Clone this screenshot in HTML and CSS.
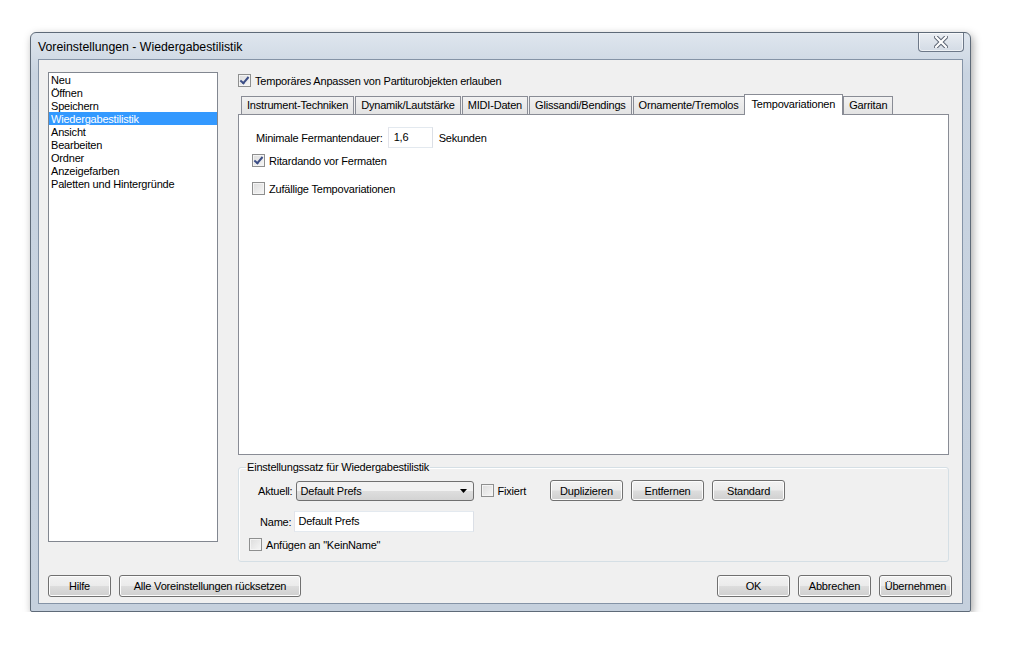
FILE: index.html
```html
<!DOCTYPE html>
<html lang="de">
<head>
    <meta charset="UTF-8">
    <title>Voreinstellungen - Wiedergabestilistik</title>
    <link rel="stylesheet" href="styles.css">
</head>
<body>
    <div class="window">
        <div class="titlebar">
            <span class="title">Voreinstellungen - Wiedergabestilistik</span>
            <div class="close-btn">
                <svg width="14" height="12" viewBox="0 0 14 12">
                    <path d="M2 1 L12 11 M12 1 L2 11" stroke="#5b6473" stroke-width="4.2" stroke-linecap="square"/>
                    <path d="M2 1 L12 11 M12 1 L2 11" stroke="#ffffff" stroke-width="2.2" stroke-linecap="square"/>
                </svg>
            </div>
        </div>
        <div class="client">
            <div class="main-row">
                <ul class="listbox">
                    <li>Neu</li>
                    <li>Öffnen</li>
                    <li>Speichern</li>
                    <li class="selected">Wiedergabestilistik</li>
                    <li>Ansicht</li>
                    <li>Bearbeiten</li>
                    <li>Ordner</li>
                    <li>Anzeigefarben</li>
                    <li>Paletten und Hintergründe</li>
                </ul>
                <div class="right-col">
                    <label class="check top-check"><span class="box checked"></span>Temporäres Anpassen von Partiturobjekten erlauben</label>
                    <div class="tabs">
                        <div class="tab">Instrument-Techniken</div>
                        <div class="tab">Dynamik/Lautstärke</div>
                        <div class="tab">MIDI-Daten</div>
                        <div class="tab">Glissandi/Bendings</div>
                        <div class="tab">Ornamente/Tremolos</div>
                        <div class="tab active">Tempovariationen</div>
                        <div class="tab">Garritan</div>
                    </div>
                    <div class="tab-panel">
                        <div class="field-row">
                            <span>Minimale Fermantendauer:</span>
                            <span class="textbox small">1,6</span>
                            <span>Sekunden</span>
                        </div>
                        <label class="check ritard"><span class="box checked"></span>Ritardando vor Fermaten</label>
                        <label class="check random"><span class="box"></span>Zufällige Tempovariationen</label>
                    </div>
                    <fieldset class="group">
                        <legend>Einstellungssatz für Wiedergabestilistik</legend>
                        <div class="group-row">
                            <span class="lbl">Aktuell:</span>
                            <div class="combo">
                                <span>Default Prefs</span>
                                <svg width="7" height="4" viewBox="0 0 7 4"><path d="M0 0 H7 L3.5 4 Z" fill="#000"/></svg>
                            </div>
                            <label class="check fix"><span class="box"></span>Fixiert</label>
                            <div class="btn">Duplizieren</div>
                            <div class="btn">Entfernen</div>
                            <div class="btn">Standard</div>
                        </div>
                        <div class="group-row name-row">
                            <span class="lbl">Name:</span>
                            <span class="textbox name">Default Prefs</span>
                        </div>
                        <label class="check attach"><span class="box"></span>Anfügen an "KeinName"</label>
                    </fieldset>
                </div>
            </div>
            <div class="footer">
                <div class="btn help">Hilfe</div>
                <div class="btn reset">Alle Voreinstellungen rücksetzen</div>
                <div class="spacer"></div>
                <div class="btn">OK</div>
                <div class="btn">Abbrechen</div>
                <div class="btn">Übernehmen</div>
            </div>
        </div>
    </div>
</body>
</html>
```

FILE: styles.css
```css
body {
    margin: 0;
    background: #ffffff;
    font-family: "Liberation Sans", Arial, sans-serif;
    font-size: 11px;
    letter-spacing: -0.2px;
    color: #000;
}

.window {
    margin: 32px 0 0 30px;
    width: 941px;
    height: 580px;
    box-sizing: border-box;
    border: 1px solid #5e6a78;
    border-radius: 6px 6px 2px 2px;
    background: linear-gradient(#dfe6ee, #c9d4e1 40px, #c5d0dd);
    box-shadow: 2px 3px 8px rgba(0, 0, 0, 0.35);
    padding: 0 7px 7px 7px;
    display: flex;
    flex-direction: column;
}

.titlebar {
    height: 26px;
    display: flex;
    align-items: flex-start;
    justify-content: space-between;
}

.title {
    font-size: 12.3px;
    letter-spacing: 0;
    margin-top: 7px;
    color: #000;
}

.close-btn {
    width: 44px;
    height: 18px;
    margin-right: -1px;
    border: 1px solid #6d7888;
    border-top: none;
    border-radius: 0 0 4px 4px;
    background: linear-gradient(#e9edf2, #d3dbe5);
    box-shadow: inset 0 0 0 1px rgba(255, 255, 255, 0.6);
    display: flex;
    align-items: center;
    justify-content: center;
}

.client {
    flex: 1;
    border: 1px solid #8493a6;
    background: #f0f0f0;
    padding: 12px 13px 0 9px;
    display: flex;
    flex-direction: column;
}

.main-row {
    display: flex;
    height: 490px;
}

.listbox {
    list-style: none;
    margin: 0;
    padding: 0;
    width: 168px;
    height: 468px;
    border: 1px solid #828790;
    background: #fff;
}

.listbox li {
    height: 13px;
    line-height: 15px;
    padding-left: 2px;
}

.listbox li.selected {
    background: #3399ff;
    color: #fff;
}

.right-col {
    margin-left: 20px;
    flex: 1;
    display: flex;
    flex-direction: column;
}

.check {
    display: flex;
    align-items: center;
    height: 13px;
}

.box {
    width: 11px;
    height: 11px;
    border: 1px solid #8e8f8f;
    background: linear-gradient(135deg, #dcdcdc, #f6f6f6);
    box-shadow: inset 0 0 0 1px #f4f4f4;
    margin-right: 4px;
    position: relative;
    flex: none;
}

.box.checked::after {
    content: "";
    position: absolute;
    left: 3px;
    top: 0px;
    width: 3px;
    height: 7px;
    border: solid #3c4e86;
    border-width: 0 2px 2px 0;
    transform: rotate(40deg);
}

.top-check {
    margin-top: 1px;
    padding-top: 1px;
}

.tabs {
    display: flex;
    align-items: flex-end;
    margin-top: 7px;
    padding-left: 3px;
    height: 20px;
}

.tab {
    height: 17px;
    line-height: 17px;
    padding: 0 5px;
    border: 1px solid #898c95;
    border-bottom: none;
    margin-right: 1px;
    background: linear-gradient(#f2f2f2, #e3e3e3);
}

.tab.active {
    height: 20px;
    line-height: 18px;
    padding: 0 7px;
    margin: 0 -1px -1px -2px;
    background: #fff;
    position: relative;
    z-index: 1;
}

.tab.active + .tab {
    margin-left: 1px;
}

.tab-panel {
    box-sizing: border-box;
    height: 341px;
    flex: none;
    border: 1px solid #898c95;
    background: #fff;
    padding: 11px 0 0 17px;
}

.field-row {
    display: flex;
    align-items: center;
    gap: 5px;
    padding-top: 1px;
}

.textbox {
    border: 1px solid #abadb3;
    border-top-color: #e3e9ef;
    border-left-color: #e2e3ea;
    border-right-color: #dbdfe6;
    border-bottom-color: #e3e9ef;
    background: #fff;
    height: 18px;
    line-height: 18px;
    padding-left: 4px;
    box-sizing: border-box;
}

.textbox.small {
    width: 45px;
    height: 21px;
    line-height: 19px;
    padding-left: 5px;
    margin-right: 1px;
}

.ritard {
    margin: 6px 0 0 -4px;
}

.random {
    margin: 15px 0 0 -4px;
}

.group {
    box-sizing: border-box;
    margin: 6px 0 0 0;
    padding: 6px 0 0 9px;
    height: 101px;
    flex: none;
    border: 1px solid #d5dfe5;
    border-radius: 3px;
    box-shadow: inset 1px 1px 0 #fff;
}

.group legend {
    padding: 0 1px;
    margin-left: -2px;
}

.group-row {
    display: flex;
    align-items: center;
    height: 21px;
    margin-top: 1px;
}

.lbl {
    margin-right: 4px;
}

.group-row .lbl {
    margin-left: 10px;
}

.combo {
    width: 178px;
    height: 20px;
    box-sizing: border-box;
    border: 1px solid #707070;
    border-radius: 3px;
    background: linear-gradient(#f2f2f2 50%, #dedede 50%, #d3d3d3);
    display: flex;
    align-items: center;
    justify-content: space-between;
    padding: 0 6px 0 3px;
}

.fix {
    margin-left: 7px;
    margin-right: 24px;
}

.fix .box {
    margin-right: 3px;
}

.btn {
    height: 21px;
    box-sizing: border-box;
    border: 1px solid #707070;
    border-radius: 3px;
    background: linear-gradient(#f2f2f2, #ebebeb 49%, #dddddd 51%, #cfcfcf);
    box-shadow: inset 0 0 0 1px #fcfcfc;
    display: flex;
    align-items: center;
    justify-content: center;
    width: 73px;
    margin-right: 8px;
}

.name-row {
    margin-top: 10px;
}

.name-row .lbl {
    margin-left: 12px;
}

.textbox.name {
    width: 180px;
    height: 21px;
    line-height: 19px;
    padding-left: 3px;
    margin-left: -1px;
}

.attach {
    margin-top: 6px;
    margin-left: 1px;
}

.footer {
    display: flex;
    align-items: center;
    margin-top: 13px;
}

.footer .btn {
    height: 22px;
    margin-right: 8px;
}

.footer .help {
    width: 63px;
}

.footer .reset {
    width: 182px;
}

.spacer {
    flex: 1;
}

.footer .btn:last-child {
    margin-right: -3px;
}
```
